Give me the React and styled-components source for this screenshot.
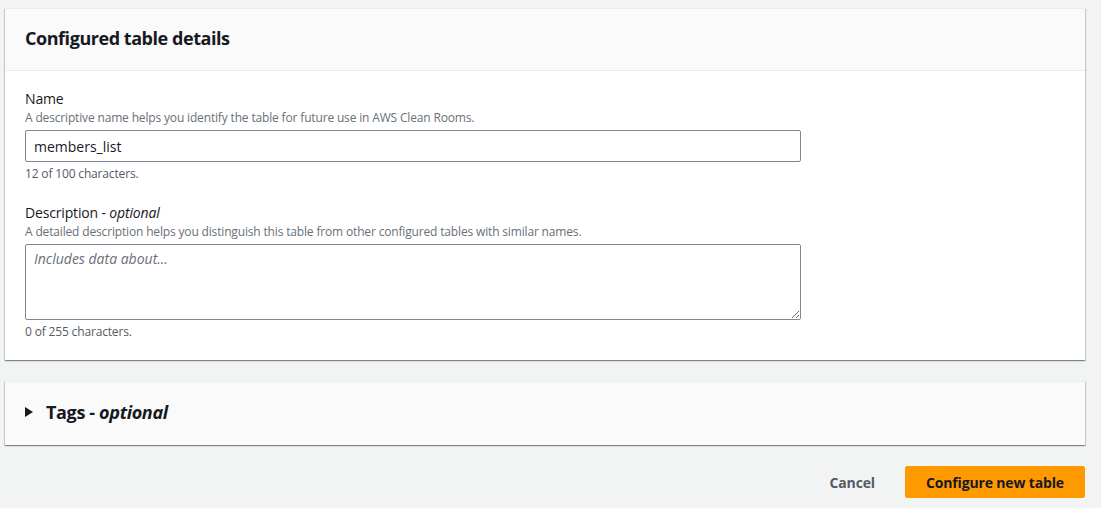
import React, { useState } from 'react';
import styled, { createGlobalStyle } from 'styled-components';

const GlobalStyle = createGlobalStyle`
  html, body {
    margin: 0;
    padding: 0;
    background: #f2f3f3;
  }
  body {
    font-family: "Open Sans", "Noto Sans", Arial, sans-serif;
    color: #16191f;
    letter-spacing: -0.01em;
  }
`;

const Page = styled.div`
  width: 1080px;
  padding: 8px 16px 11px 5px;
  display: flex;
  flex-direction: column;
  gap: 21px;
`;

const Card = styled.section`
  background: #fff;
  border-top: 1px solid #eaeded;
  box-shadow: 0 1px 1px 0 rgba(0, 28, 36, 0.3), 1px 1px 1px 0 rgba(0, 28, 36, 0.15),
    -1px 1px 1px 0 rgba(0, 28, 36, 0.15);
`;

const CardHeader = styled.header`
  background: #fafafa;
  border-bottom: 1px solid #eaeded;
  padding: 18px 20px 21px;
`;

const Heading = styled.h2`
  margin: 0;
  font-size: 18px;
  line-height: 22px;
  font-weight: 700;
  letter-spacing: -0.45px;
`;

const CardBody = styled.div`
  padding: 18px 20px 20px;
  display: flex;
  flex-direction: column;
  gap: 21px;
`;

const Field = styled.div`
  display: flex;
  flex-direction: column;
`;

const Label = styled.label`
  font-size: 14px;
  line-height: 20px;
  color: #16191f;

  em {
    font-style: italic;
  }
`;

const Hint = styled.div`
  font-size: 12px;
  line-height: 16px;
  color: #687078;
  margin-top: 1px;
  margin-bottom: ${({ gapBelow }) => gapBelow || 0}px;
`;

const TextInput = styled.input`
  box-sizing: border-box;
  width: 776px;
  height: 32px;
  padding: 4px 8px;
  border: 1px solid #7d8998;
  border-radius: 2px;
  font: inherit;
  font-size: 14px;
  color: #16191f;
  background: #fff;
  outline: none;
`;

const TextArea = styled.textarea`
  box-sizing: border-box;
  width: 776px;
  height: 76px;
  padding: 4px 8px;
  border: 1px solid #7d8998;
  border-radius: 2px;
  font: inherit;
  font-size: 14px;
  color: #16191f;
  background: #fff;
  outline: none;
  resize: vertical;

  &::placeholder {
    font-style: italic;
    color: #687078;
  }
`;

const Counter = styled.div`
  font-size: 12px;
  line-height: 16px;
  color: #545b64;
  margin-top: 4px;
`;

const ExpandCard = styled(Card)`
  background: #fafafa;
`;

const ExpandHeader = styled.button`
  width: 100%;
  display: flex;
  align-items: center;
  gap: 13px;
  padding: 19px 20px 22px;
  background: none;
  border: none;
  font: inherit;
  color: #16191f;
  cursor: pointer;
  text-align: left;
`;

const Caret = styled.svg`
  width: 8px;
  height: 10px;
  flex: none;
`;

const ExpandTitle = styled.span`
  font-size: 18px;
  line-height: 22px;
  font-weight: 700;
  letter-spacing: -0.35px;

  em {
    font-style: italic;
  }
`;

const Actions = styled.div`
  display: flex;
  justify-content: flex-end;
  align-items: center;
  gap: 9px;
`;

const Button = styled.button`
  height: 32px;
  padding: 0 20px;
  border-radius: 2px;
  font: inherit;
  font-size: 14px;
  font-weight: 700;
  letter-spacing: -0.15px;
  cursor: pointer;
  border: 1px solid ${({ primary }) => (primary ? '#ff9900' : 'transparent')};
  background: ${({ primary }) => (primary ? '#ff9900' : 'transparent')};
  color: ${({ primary }) => (primary ? '#16191f' : '#545b64')};
`;

export default function App() {
  const [name, setName] = useState('members_list');
  const [desc, setDesc] = useState('');

  return (
    <>
      <GlobalStyle />
      <Page>
        <Card>
          <CardHeader>
            <Heading>Configured table details</Heading>
          </CardHeader>
          <CardBody>
            <Field>
              <Label>Name</Label>
              <Hint gapBelow={4}>
                A descriptive name helps you identify the table for future use in AWS Clean Rooms.
              </Hint>
              <TextInput value={name} onChange={(e) => setName(e.target.value)} />
              <Counter>{name.length} of 100 characters.</Counter>
            </Field>
            <Field>
              <Label>
                Description - <em>optional</em>
              </Label>
              <Hint gapBelow={4}>
                A detailed description helps you distinguish this table from other configured tables with similar names.
              </Hint>
              <TextArea
                placeholder="Includes data about..."
                value={desc}
                onChange={(e) => setDesc(e.target.value)}
              />
              <Counter>{desc.length} of 255 characters.</Counter>
            </Field>
          </CardBody>
        </Card>

        <ExpandCard>
          <ExpandHeader>
            <Caret viewBox="0 0 8 10">
              <path d="M0 0 L8 5 L0 10 Z" fill="#16191f" />
            </Caret>
            <ExpandTitle>
              Tags - <em>optional</em>
            </ExpandTitle>
          </ExpandHeader>
        </ExpandCard>

        <Actions>
          <Button>Cancel</Button>
          <Button primary>Configure new table</Button>
        </Actions>
      </Page>
    </>
  );
}
